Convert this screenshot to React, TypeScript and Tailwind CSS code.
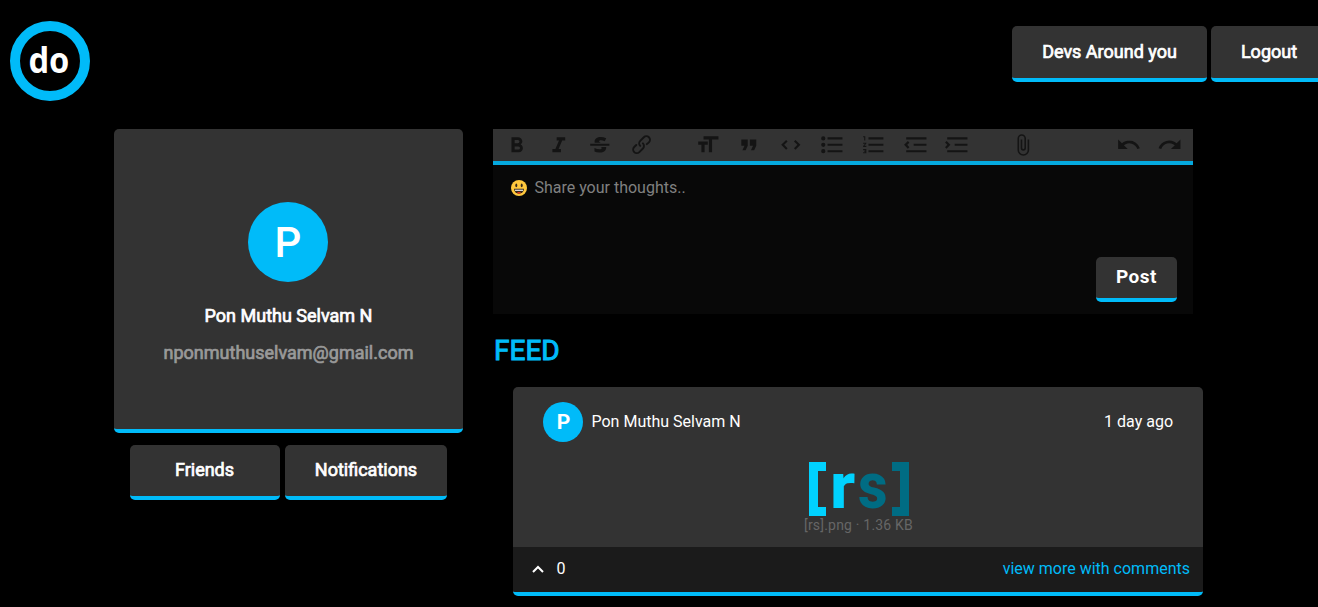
import React from "react";

const icons = {
  bold: "M15.6 11.8c1-.7 1.6-1.8 1.6-2.8a4 4 0 0 0-4-4H7v14h7c2.1 0 3.7-1.7 3.7-3.8 0-1.5-.8-2.8-2.1-3.4zM10 7.5h3a1.5 1.5 0 1 1 0 3h-3v-3zm3.5 9H10v-3h3.5a1.5 1.5 0 1 1 0 3z",
  italic: "M10 5v3h2.2l-3.4 8H6v3h8v-3h-2.2l3.4-8H18V5h-8z",
  strike:
    "M12.73 14l.28.14c.26.15.45.3.57.44.12.14.18.3.18.5 0 .3-.15.56-.44.75-.3.2-.76.3-1.39.3A13.52 13.52 0 0 1 7 14.95v3.37a10.64 10.64 0 0 0 4.84.88c1.26 0 2.35-.19 3.28-.56.93-.37 1.64-.9 2.14-1.57s.74-1.45.74-2.32c0-.26-.02-.51-.06-.75h-5.21zm-5.5-4c-.08-.34-.12-.7-.12-1.1 0-1.29.52-2.3 1.58-3.02 1.05-.72 2.5-1.08 4.34-1.08 1.62 0 3.28.34 4.97 1l-1.3 2.93c-1.47-.6-2.73-.9-3.8-.9-.55 0-.96.08-1.2.26-.26.17-.38.38-.38.64 0 .27.16.52.48.74.17.12.53.3 1.05.53H7.23zM3 13h18v-2H3v2z",
  link: "M9.88 13.7a4.3 4.3 0 0 1 0-6.07l3.37-3.37a4.26 4.26 0 0 1 6.07 0 4.3 4.3 0 0 1 0 6.06l-1.96 1.72a.91.91 0 1 1-1.3-1.3l1.97-1.71a2.46 2.46 0 0 0-3.48-3.48l-3.38 3.37a2.46 2.46 0 0 0 0 3.48.91.91 0 1 1-1.3 1.3zM4.25 19.46a4.3 4.3 0 0 1 0-6.07l1.93-1.9a.91.91 0 1 1 1.3 1.3l-1.93 1.9a2.46 2.46 0 0 0 3.48 3.48l3.37-3.38c.96-.96.96-2.52 0-3.48a.91.91 0 1 1 1.3-1.3 4.3 4.3 0 0 1 0 6.07l-3.38 3.38a4.26 4.26 0 0 1-6.07 0z",
  heading: "M12 9v3H9v7H6v-7H3V9h9zM8 4h14v3h-6v12h-3V7H8V4z",
  quote: "M6 17h3l2-4V7H5v6h3zm8 0h3l2-4V7h-6v6h3z",
  code: "M18.2 12L15 15.2l1.4 1.4L21 12l-4.6-4.6L15 8.8l3.2 3.2zM5.8 12L9 8.8 7.6 7.4 3 12l4.6 4.6L9 15.2 5.8 12z",
  bullets:
    "M4 4a2 2 0 1 0 0 4 2 2 0 0 0 0-4zm0 6a2 2 0 1 0 0 4 2 2 0 0 0 0-4zm0 6a2 2 0 1 0 0 4 2 2 0 0 0 0-4zm4 3h14v-2H8v2zm0-6h14v-2H8v2zm0-8v2h14V5H8z",
  numbers:
    "M2 17h2v.5H3v1h1v.5H2v1h3v-4H2v1zm1-9h1V4H2v1h1v3zm-1 3h1.8L2 13.1v.9h3v-1H3.2L5 10.9V10H2v1zm5-6v2h14V5H7zm0 14h14v-2H7v2zm0-6h14v-2H7v2z",
  outdent: "M3 19h19v-2H3v2zm7-6h12v-2H10v2zm-8.3-.3l2.8 2.9L6 14.2 4 12l2-2-1.4-1.5L1 12l.7.7zM3 5v2h19V5H3z",
  indent: "M3 19h19v-2H3v2zm7-6h12v-2H10v2zm-6.9-1L1 14.2l1.4 1.4L6 12l-.7-.7-2.8-2.8L1 9.9 3.1 12zM3 5v2h19V5H3z",
  attach:
    "M16.5 7v9.8a4 4 0 1 1-8 0V6a2.5 2.5 0 0 1 5 0v9a1 1 0 1 1-2 0V7H10v8a2.5 2.5 0 0 0 5 0V6a4 4 0 1 0-8 0v10.8a5.5 5.5 0 0 0 11 0V7h-1.5z",
  undo: "M12.5 8c-2.6 0-5 1-6.9 2.6L2 7v9h9l-3.6-3.6A8 8 0 0 1 20 16l2.4-.8a10.5 10.5 0 0 0-10-7.2z",
  redo: "M18.4 10.6a10.5 10.5 0 0 0-16.9 4.6L4 16a8 8 0 0 1 12.7-3.6L13 16h9V7l-3.6 3.6z",
};

type IconName = keyof typeof icons;

function ToolGroup({ names }: { names: IconName[] }) {
  return (
    <div className="flex">
      {names.map((name) => (
        <button key={name} aria-label={name} className="flex h-8 w-[41.6px] items-center justify-center">
          <svg viewBox="0 0 24 24" className="size-[25.6px] fill-black opacity-60">
            <path d={icons[name]} />
          </svg>
        </button>
      ))}
    </div>
  );
}

function Button({ children, className }: { children: React.ReactNode; className: string }) {
  return (
    <button
      className={`shrink-0 rounded-[5px] border-b-4 border-[#00bbf9] bg-[#333] text-[18px] leading-6 whitespace-nowrap text-white [-webkit-text-stroke:0.7px_white] ${className}`}
    >
      {children}
    </button>
  );
}

function Smiley() {
  return (
    <svg viewBox="0 0 16 16" className="mb-px size-4">
      <circle cx="8" cy="8" r="8" fill="#ffc83d" />
      <ellipse cx="5.3" cy="5.4" rx="1" ry="1.8" fill="#35291c" />
      <ellipse cx="10.7" cy="5.4" rx="1" ry="1.8" fill="#35291c" />
      <path d="M3 8.8h10a5 5 0 0 1-10 0z" fill="#35291c" />
      <path d="M4 9.7h8v1.1H4z" fill="#fff" />
      <path d="M5.8 12.9q2.2-1.6 4.4 0Q8 14.3 5.8 12.9z" fill="#f03a17" />
    </svg>
  );
}

export default function App() {
  return (
    <div className="h-[607px] w-full overflow-hidden bg-black font-[Roboto,sans-serif] text-white">
      <header className="flex h-[129px] items-start justify-between pl-2.5">
        <div className="mt-[21px] flex size-20 items-center justify-center rounded-full border-[10px] border-[#00bbf9] pr-0.5 pb-1 font-['Noto_Sans',sans-serif] text-[35px] leading-none font-bold">
          <span className="scale-x-[0.93]">do</span>
        </div>
        <nav className="mt-[26px] flex w-[306px] gap-1">
          <Button className="h-14 w-[195px]">Devs Around you</Button>
          <Button className="h-14 w-[116px]">Logout</Button>
        </nav>
      </header>

      <main className="flex items-start gap-[30px] pl-[114px]">
        <aside className="w-[349px]">
          <div className="flex h-[304px] flex-col items-center rounded-[5px] border-b-4 border-[#00bbf9] bg-[#333] pt-[73px]">
            <div className="mr-px flex size-20 items-center justify-center rounded-full bg-[#00bbf9] text-[42px] font-medium">
              P
            </div>
            <div className="mt-[22px] text-[18px] leading-6 [-webkit-text-stroke:0.7px_white]">Pon Muthu Selvam N</div>
            <div className="mt-[13px] text-[18px] leading-6 text-[#999] [-webkit-text-stroke:0.7px_#999]">
              nponmuthuselvam@gmail.com
            </div>
          </div>
          <div className="mt-3 flex justify-center gap-[5px]">
            <Button className="h-[55px] w-[150px] pr-px pb-0.5">Friends</Button>
            <Button className="h-[55px] w-[162px] pb-0.5">Notifications</Button>
          </div>
        </aside>

        <section className="w-[710px]">
          <div className="flex h-[185px] w-[700px] flex-col bg-[#080808]">
            <div className="flex h-9 shrink-0 justify-between border-b-4 border-[#05a9df] bg-[#333] pr-[2px] pl-[3.2px]">
              <div className="flex gap-6">
                <ToolGroup names={["bold", "italic", "strike", "link"]} />
                <ToolGroup names={["heading", "quote", "code", "bullets", "numbers", "outdent", "indent"]} />
                <ToolGroup names={["attach"]} />
              </div>
              <ToolGroup names={["undo", "redo"]} />
            </div>
            <div className="flex grow flex-col justify-between pr-4 pb-3 pl-[18.4px]">
              <div className="mt-[11px] flex items-center gap-[7px] text-base text-[#808080]">
                <Smiley />
                <span>Share your thoughts..</span>
              </div>
              <button className="h-[45px] w-[81px] self-end rounded-[5px] border-b-4 border-[#00bbf9] bg-[#333] text-[19px] font-bold tracking-[0.5px]">
                Post
              </button>
            </div>
          </div>

          <h2 className="mt-[19px] pl-px text-[28px] leading-9 text-[#00bbf9] [-webkit-text-stroke:1px_#00bbf9]">
            FEED
          </h2>

          <article className="mt-[18px] ml-5 h-[209px] w-[690px] overflow-hidden rounded-[5px] border-b-4 border-[#00bbf9] bg-[#333]">
            <div className="flex h-[160px] flex-col">
              <div className="mt-[15px] flex h-10 items-center px-[30px]">
                <div className="flex size-10 items-center justify-center rounded-full bg-[#00bbf9] pt-0.5 pl-px text-[21px] font-bold">
                  P
                </div>
                <span className="ml-[8.5px] grow">Pon Muthu Selvam N</span>
                <span>1 day ago</span>
              </div>
              <div className="mt-5 flex flex-col items-center pl-px">
                <div className="flex h-[54px] w-[100px] text-[64px] leading-[50px] font-extrabold">
                  <span className="h-[54px] w-[17px] border-y-[9px] border-l-[9px] border-[#00d2ff]" />
                  <span className="ml-[4px] h-[50px] w-[26px] origin-left scale-x-[1.06] text-[#00d2ff]">r</span>
                  <span className="ml-[2px] h-[50px] w-[33px] origin-left scale-x-[0.9] text-[#006c83]">s</span>
                  <span className="ml-auto h-[54px] w-[17px] border-y-[9px] border-r-[9px] border-[#006c83]" />
                </div>
                <span className="text-[14px] leading-[18px] tracking-[0.2px] text-[#666]">[rs].png · 1.36 KB</span>
              </div>
            </div>
            <footer className="flex h-[45px] items-center bg-[#1b1b1b] pr-[13px] pb-0.5 pl-[19px]">
              <svg viewBox="0 0 12 8" className="mt-px h-2 w-3 fill-none stroke-white stroke-2">
                <path d="M1 7l5-5 5 5" />
              </svg>
              <span className="ml-[12.5px] grow">0</span>
              <a className="text-[#00bbf9]">view more with comments</a>
            </footer>
          </article>
        </section>
      </main>
    </div>
  );
}
